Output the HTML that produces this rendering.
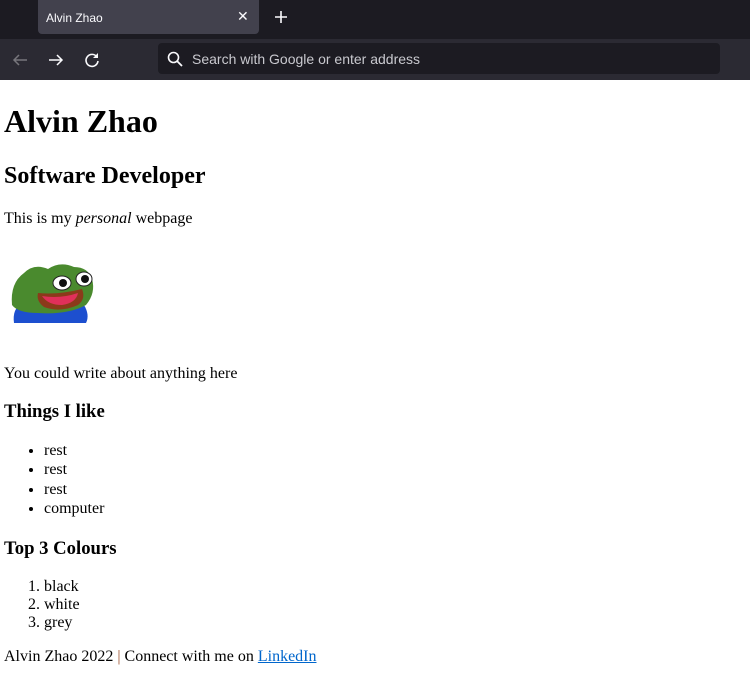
<!DOCTYPE html>
<html><head><meta charset="utf-8"><style>
html,body{margin:0;padding:0;width:750px;height:679px;overflow:hidden;background:#fff}
#chrome{position:absolute;left:0;top:0;width:750px;height:80px;background:#1c1b22;font-family:"Liberation Sans",sans-serif}
#tab{position:absolute;left:38px;top:0;width:221px;height:34px;background:#42414d;border-radius:0 0 4px 4px;color:#fbfbfe;font-size:12px}
#bar{position:absolute;left:0;top:39px;width:750px;height:41px;background:#2b2a33}
#url{position:absolute;left:158px;top:4px;width:562px;height:31px;background:#1c1b22;border-radius:4px;color:#c9c9cf;font-size:14px}
#page{position:absolute;left:0;top:82px;width:750px;font-family:"Liberation Serif",serif;font-size:16px;color:#000;padding:0 4px;box-sizing:border-box}
h1{font-size:32px;margin:21px 0 23px}
h2{font-size:24px;margin:20px 0}
h3{font-size:18.7px;margin:18px 0}
p{margin:16px 0}
ul,ol{margin:16px 0;padding-left:40px}
ul li{line-height:19.4px}
a{color:#0066cc}
</style></head><body>
<div id="chrome">
<div id="tab"><span style="position:absolute;left:8px;top:11px">Alvin Zhao</span><span style="position:absolute;left:199px;top:8px;font-size:14px">✕</span></div>
<svg style="position:absolute;left:274px;top:10px" width="14" height="14"><path d="M7 1v12M1 7h12" stroke="#fbfbfe" stroke-width="1.6"/></svg>
<div id="bar">
<svg style="position:absolute;left:12px;top:13px" width="16" height="16"><path d="M15 8H2M7 3L2 8l5 5" stroke="#77767c" stroke-width="1.5" fill="none"/></svg>
<svg style="position:absolute;left:48px;top:13px" width="16" height="16"><path d="M1 8h13M9 3l5 5-5 5" stroke="#fbfbfe" stroke-width="1.5" fill="none"/></svg>
<svg style="position:absolute;left:84px;top:13px" width="16" height="16"><path d="M13 5A6 6 0 1 0 14 9" stroke="#fbfbfe" stroke-width="1.6" fill="none"/><path d="M14 1v5H9" fill="#fbfbfe"/></svg>
<div id="url"><svg style="position:absolute;left:9px;top:8px" width="16" height="16"><circle cx="6.5" cy="6.5" r="5" stroke="#fbfbfe" stroke-width="1.6" fill="none"/><path d="M10 10l5 5" stroke="#fbfbfe" stroke-width="1.8"/></svg><span style="position:absolute;left:34px;top:8px">Search with Google or enter address</span></div>
</div></div>
<div id="page">
<h1>Alvin Zhao</h1>
<h2>Software Developer</h2>
<p>This is my <i>personal</i> webpage</p>
<div style="height:105px;position:relative">
<svg style="position:absolute;left:4px;top:15px" width="90" height="68" viewBox="0 0 90 68">
<path d="M6 64 Q4 50 14 44 L76 46 Q82 56 78 64 Z" fill="#1d4fcf"/>
<path d="M4 46 Q2 24 16 14 Q26 4 40 10 Q52 2 66 8 Q80 8 84 20 Q88 34 78 46 Q60 56 30 54 Q10 54 4 46Z" fill="#4a8a2e"/>
<path d="M30 34 Q50 36 74 30 Q78 40 70 46 Q52 54 36 48 Q28 42 30 34Z" fill="#8b3a1a"/>
<path d="M34 37 Q52 40 70 34 Q68 44 54 46 Q40 46 34 37Z" fill="#e0305a"/>
<ellipse cx="54" cy="24" rx="9" ry="7" fill="#fff" stroke="#222"/>
<ellipse cx="76" cy="20" rx="8" ry="7" fill="#fff" stroke="#222"/>
<circle cx="55" cy="24" r="4" fill="#111"/><circle cx="77" cy="20" r="4" fill="#111"/>
</svg></div>
<p>You could write about anything here</p>
<h3>Things I like</h3>
<ul><li>rest</li><li>rest</li><li>rest</li><li>computer</li></ul>
<h3 style="margin-top:19px">Top 3 Colours</h3>
<ol><li>black</li><li>white</li><li>grey</li></ol>
<p>Alvin Zhao 2022 <span style="color:#a0522d">|</span> Connect with me on <a href="#">LinkedIn</a></p>
</div>
</body></html>
